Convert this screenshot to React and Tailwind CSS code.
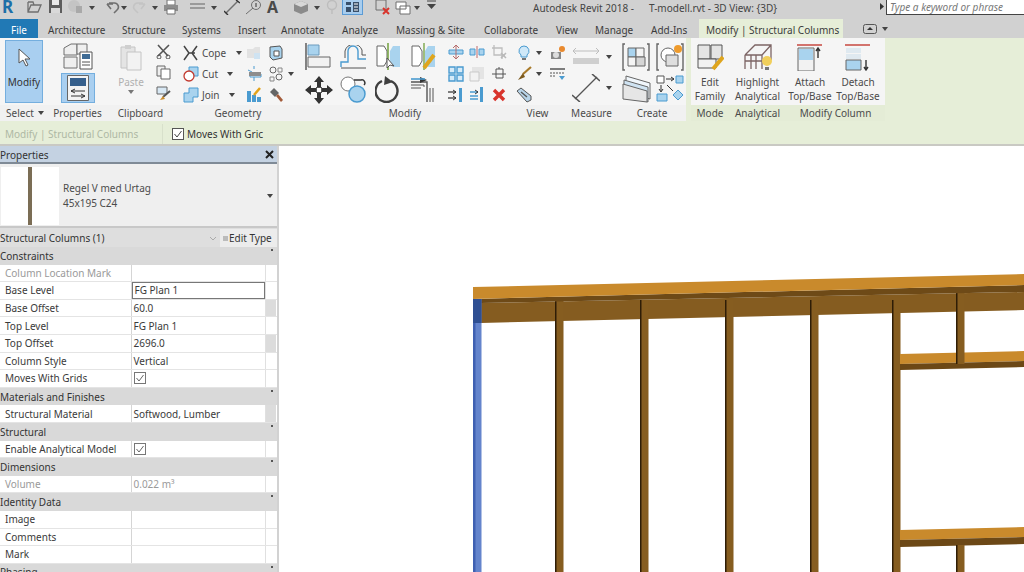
const Svg = ({ w = 16, h = 16, className = '', children }) => (
  <svg width={w} height={h} viewBox={`0 0 ${w} ${h}`} fill="none" className={`shrink-0 ${className}`}>
    {children}
  </svg>
);

const Caret = ({ className = '', color = '#444' }) => (
  <svg width="6" height="4" viewBox="0 0 6 4" className={`shrink-0 ${className}`}>
    <path d="M0 0h6L3 4z" fill={color} />
  </svg>
);

const GRAY = '#6f6f6f';
const BLUE = '#4a9bd0';
const LIGHT = '#a9d3ee';

// quick access toolbar, cut off at the top of the window
const QuickBar = () => (
  <div className="flex h-[19px] items-start overflow-hidden">
    <span className="ml-[2px] w-[12px] text-[17px] font-bold leading-[14px] text-[#1d6fa8]">R</span>
    <Svg className="ml-[13px]" w={15} h={14}><path d="M1 2v10h10l3-7H4l-3 7M1 2h5l1 3" stroke={GRAY} strokeWidth="1.3" /></Svg>
    <Svg className="ml-[6px]" w={15} h={14}><path d="M1 0h13v13H1z" fill="#5d5d5d" /><path d="M4 0h7v5H4z" fill="#e8e8e8" /><path d="M3 8h9v5H3z" fill="#d9d9d9" /></Svg>
    <Svg className="ml-[5px]" w={15} h={14}><circle cx="6" cy="6" r="6" fill="#c4c4c4" /><path d="M8 6h6v7H8z" fill="#a9a9a9" /></Svg>
    <Caret className="ml-[6px] mt-[6px]" />
    <Svg className="ml-[10px]" w={15} h={14}><path d="M2 4l4 5M2 4h6M4 3h5a4 4 0 0 1 3 7l-3 3" stroke={GRAY} strokeWidth="1.6" /></Svg>
    <Caret className="ml-[1px] mt-[6px]" />
    <Svg className="ml-[5px]" w={15} h={14}><path d="M13 4l-4 5M13 4H7M11 3H6a4 4 0 0 0-3 7l3 3" stroke="#c4c4c4" strokeWidth="1.6" /></Svg>
    <Caret className="ml-[5px] mt-[6px]" />
    <Svg className="ml-[5px]" w={16} h={15}><path d="M4 0h8v5H4z" fill="#fff" stroke={GRAY} /><path d="M1 5h14v6H1z" fill="#8d8d8d" /><path d="M4 9h8v5H4z" fill="#fff" stroke={GRAY} /></Svg>
    <Svg className="ml-[11px]" w={15} h={14}><path d="M0 4h15M0 8h15" stroke="#9a9a9a" strokeWidth="2" /></Svg>
    <Caret className="ml-[6px] mt-[6px]" />
    <Svg className="ml-[7px]" w={16} h={15}><path d="M2 13L14 1" stroke={GRAY} strokeWidth="1.4" /><path d="M0 11l4 4M12 0l4 3" stroke="#333" strokeWidth="1.4" /></Svg>
    <Svg className="ml-[5px]" w={17} h={15}><circle cx="11" cy="5" r="4.5" stroke={GRAY} /><path d="M1 14l7-6" stroke={GRAY} /><path d="M11 3v4" stroke="#333" /></Svg>
    <span className="ml-[5px] w-[12px] text-[16px] font-bold leading-[14px] text-[#4a4a4a]">A</span>
    <Svg className="ml-[14px]" w={16} h={15}><path d="M8 1l7 3v7l-7 3-7-3V4z" fill="#8b8b8b" /><path d="M8 7l7-3-7-3-7 3z" fill="#d8d8d8" /></Svg>
    <Caret className="ml-[5px] mt-[6px]" />
    <Svg className="ml-[6px]" w={12} h={14}><circle cx="6" cy="5" r="4.5" stroke="#bdbdbd" strokeWidth="1.4" /><path d="M6 10v4" stroke="#bdbdbd" strokeWidth="1.4" /></Svg>
    <div className="ml-[4px] -mt-[1px] flex h-[16px] w-[21px] items-center justify-center border border-[#5b9bd5] bg-[#a8cdee]">
      <Svg w={15} h={12}><path d="M1 1h5v3H1zM1 6h5v5H1zM8 1h6v10H8z" fill="#38506b" /><path d="M9 3h4M9 6h4M9 9h4" stroke="#fff" /></Svg>
    </div>
    <Svg className="ml-[12px]" w={16} h={15}><path d="M1 0h10v10H1z" stroke={GRAY} /><path d="M8 8l6 6m0-6l-6 6" stroke="#d8342c" strokeWidth="2" /></Svg>
    <Svg className="ml-[4px]" w={16} h={15}><path d="M1 2h10v7H1zM5 6h10v8H5z" fill="#fff" stroke={GRAY} /></Svg>
    <Caret className="ml-[3px] mt-[6px]" />
    <Svg className="ml-[7px]" w={9} h={10}><path d="M0 1h9" stroke="#444" /><path d="M0 4h9L4.5 9z" fill="#444" /></Svg>
  </div>
);

const tabs = [
  ['Architecture', 'w-[74px]'],
  ['Structure', 'w-[60px]'],
  ['Systems', 'w-[56px]'],
  ['Insert', 'w-[43px]'],
  ['Annotate', 'w-[61px]'],
  ['Analyze', 'w-[54px]'],
  ['Massing & Site', 'w-[88px]'],
  ['Collaborate', 'w-[72px]'],
  ['View', 'w-[39px]'],
  ['Manage', 'w-[56px]'],
  ['Add-Ins', 'w-[48px]'],
];

const TabBar = () => (
  <div className="flex h-[19px] items-center bg-[#d1d1d1] text-[#3c3c3c]">
    <div className="mr-[10px] flex h-[19px] w-[38px] items-center justify-center bg-[#2179b5] pt-[2px] text-white">File</div>
    {tabs.map(([name, width]) => (
      <span key={name} className={`pt-[2px] ${width}`}>{name}</span>
    ))}
    <div className="flex h-[19px] w-[144px] items-center bg-[#e6eed8] pl-[7px] pt-[2px]">Modify | Structural Columns</div>
    <Svg className="ml-[20px]" w={14} h={10}><rect x="0.5" y="0.5" width="13" height="9" rx="2" stroke="#555" /><path d="M4 6h6L7 3z" fill="#333" /></Svg>
    <Caret className="ml-[5px]" />
  </div>
);

const Panel = ({ label, width, green, children }) => (
  <div className={`flex shrink-0 flex-col ${width}`}>
    <div className="h-[67px] bg-[#f5f5f5]">{children}</div>
    <div className={`flex h-[16px] items-center justify-center whitespace-nowrap text-[#4b4b4b] ${green ? 'bg-[#e4ecd6]' : 'bg-[#f1f1f1]'}`}>
      {label}
    </div>
  </div>
);

const SelectPanel = () => (
  <Panel width="w-[50px]" label={<span className="flex items-center gap-[4px]">Select <Caret /></span>}>
    <div className="ml-[5px] mt-[2px] flex h-[63px] w-[38px] flex-col items-center border border-[#74aede] bg-[#a9cff0] text-[#333]">
      <Svg className="mt-[7px]" w={13} h={20}><path d="M1 1v14l4-3 3 6 2-1-3-6h5z" fill="#fff" stroke="#555" /></Svg>
      <span className="mt-[9px]">Modify</span>
    </div>
  </Panel>
);

const PropertiesPanel = () => (
  <Panel width="w-[55px]" label="Properties">
    <div className="flex flex-col items-center pt-[5px]">
      <Svg w={30} h={27}>
        <path d="M1 5l7-4h6v11H1zM1 14h13v11H1z" fill="#efefef" stroke={GRAY} />
        <path d="M14 1h10v10H14z" fill="#efefef" stroke={GRAY} />
        <path d="M17 9h12v17H17z" fill="#fff" stroke="#555" />
        <path d="M19 11h8v5h-8z" fill="#3f6b94" />
        <path d="M19 19h8M19 22h8" stroke="#555" />
      </Svg>
      <div className="mt-[3px] flex h-[30px] w-[34px] items-center justify-center border border-[#74aede] bg-[#a9cff0]">
        <Svg w={22} h={26}>
          <path d="M.5.5h21v25H.5z" fill="#f3f3f3" stroke="#666" />
          <path d="M3 3h16v8H3z" fill="#355f8c" />
          <path d="M4 16h14M4 21h14M8 14l-4 2 4 2M14 19l4 2-4 2" stroke="#333" />
        </Svg>
      </div>
    </div>
  </Panel>
);

const ClipboardPanel = () => (
  <Panel width="w-[71px]" label="Clipboard">
    <div className="flex pl-[13px] pt-[6px]">
      <div className="flex w-[26px] flex-col items-center text-[#b0b0b0]">
        <Svg w={24} h={27}><path d="M2 3h14v21H2z" fill="#e4e4e4" stroke="#c4c4c4" /><path d="M8 8h14v18H8z" fill="#f2f2f2" stroke="#c4c4c4" /><path d="M6 1h6v4H6z" fill="#cfcfcf" /></Svg>
        <span className="mt-[6px]">Paste</span>
        <Caret className="mt-[3px]" color="#777" />
      </div>
      <div className="ml-[12px] flex flex-col items-center gap-[6px]">
        <Svg w={15} h={15}><path d="M2 1l10 11M13 1L2 12" stroke="#555" strokeWidth="1.6" /><circle cx="3" cy="13" r="2" stroke="#555" /><circle cx="12" cy="13" r="2" stroke="#555" /></Svg>
        <Svg w={15} h={15}><path d="M1 1h8v10H1z" fill="#eee" stroke="#666" /><path d="M5 4h9v10H5z" fill="#fff" stroke="#666" /></Svg>
        <Svg w={15} h={15}><path d="M1 1h10v7H1z" fill="#d8e8f4" stroke="#666" /><path d="M14 5L7 11" stroke="#555" strokeWidth="2" /><path d="M7 10l-3 4 5-1z" fill="#c98b2c" /></Svg>
      </div>
    </div>
  </Panel>
);

const geometryRows = [
  {
    name: 'Cope',
    text: 'w-[34px]',
    icon: <Svg><path d="M1 1l5 7-5 7M14 1L9 8l5 7M5 8h7" stroke="#444" strokeWidth="1.5" /></Svg>,
    a: <Svg><path d="M1 4h6l2-2h5v11H1z" fill="#e2e2e2" /><path d="M8 8h6v6H8z" fill="#cfe3f2" /></Svg>,
    b: <Svg><path d="M2 2l10-1 2 3v9l-9 2-3-3z" fill={LIGHT} stroke="#555" /><path d="M6 6h5v5H6z" fill="#fff" stroke="#555" /></Svg>,
  },
  {
    name: 'Cut',
    text: 'w-[25px]',
    icon: <Svg><path d="M6 1h9v9H6z" fill={LIGHT} stroke={BLUE} /><circle cx="6" cy="10" r="5" fill="#fff" stroke="#c2392e" strokeWidth="1.3" /></Svg>,
    a: <Svg><path d="M8 0v3M8 11v4M2 4l4 2M4 8h11v3H4z" stroke={BLUE} /><path d="M3 6h12v4H3z" fill="#8d8d8d" /></Svg>,
    b: <Svg><circle cx="5" cy="4" r="3" stroke="#666" /><circle cx="11" cy="11" r="3" stroke="#666" /><path d="M2 11h4v4H2zM10 2h4v4h-4z" stroke="#888" /></Svg>,
    caret: true,
  },
  {
    name: 'Join',
    text: 'w-[27px]',
    icon: <Svg><path d="M6 1h9v9h-5v5H1V6h5z" fill={LIGHT} stroke={BLUE} /></Svg>,
    a: <Svg><path d="M1 4h4v11H1zM6 8h4v7H6zM11 10h4v5h-4z" fill={BLUE} /><path d="M14 1L8 8" stroke="#e2a31b" strokeWidth="2.5" /></Svg>,
    b: <Svg><path d="M2 5l4-4 5 5-4 4z" fill="#666" /><path d="M8 9l2-2 5 6-2 2z" fill="#a35b3a" /></Svg>,
  },
];

const GeometryPanel = () => (
  <Panel width="w-[124px]" label="Geometry">
    <div className="flex flex-col pl-[7px] pt-[4px] text-[#4b4b4b]">
      {geometryRows.map((row) => (
        <div key={row.name} className="flex h-[21px] items-center">
          <div className="flex w-[63px] items-center">
            {row.icon}
            <span className={`ml-[3px] ${row.text}`}>{row.name}</span>
            <Caret />
          </div>
          {row.a}
          <span className="ml-[6px]">{row.b}</span>
          {row.caret && <Caret className="ml-[4px]" />}
        </div>
      ))}
    </div>
  </Panel>
);

const mirrorShape = 'M2 3h7l3 5v10l-3 5H2z';

const modifyLarge = [
  <Svg key="align" w={28} h={27}><path d="M1 0v27" stroke="#666" strokeWidth="1.6" /><path d="M3 2h11v10H3z" fill={LIGHT} stroke="#6c9bbd" /><path d="M3 14h22v10H3z" fill="#f2f2f2" stroke="#666" /></Svg>,
  <Svg key="offset" w={27} h={24}><path d="M1 22V17h7V6a5 5 0 0 1 10 0v8h8" stroke={BLUE} strokeWidth="1.4" /><path d="M1 23h25M5 13V6a9 9 0 0 1 17-1v5h4" stroke="#555" /></Svg>,
  <Svg key="mirror-pick" w={26} h={27}><path d={mirrorShape} fill="#fff" stroke="#666" /><path d="M13 0v27" stroke="#7aa64a" strokeWidth="1.6" /><path d="M25 3h-7l-3 5v12l3 4h7z" fill={LIGHT} /><path d="M12 15v10l3-3 4 1z" fill="#fff" stroke="#555" /></Svg>,
  <Svg key="mirror-draw" w={26} h={27}><path d={mirrorShape} fill="#fff" stroke="#666" /><path d="M14 0v27" stroke="#7aa64a" strokeWidth="1.4" /><path d="M25 3h-7l-3 5v12l3 4h7z" fill={LIGHT} /><path d="M24 12L14 25" stroke="#dfa51d" strokeWidth="4" /></Svg>,
  <Svg key="move" w={28} h={28}><path d="M14 0l5 6h-3v5h-4V6H9zM14 28l5-6h-3v-5h-4v5H9zM0 14l6-5v3h5v4H6v3zM28 14l-6-5v3h-5v4h5v3z" fill="#333" /><rect x="11.5" y="11.5" width="5" height="5" fill="#fff" stroke="#555" /></Svg>,
  <Svg key="copy" w={27} h={27}><circle cx="8" cy="8" r="7" fill="#fff" stroke="#777" /><circle cx="17" cy="18" r="8" fill={LIGHT} stroke={BLUE} strokeWidth="1.5" /><path d="M14 4h7a3 3 0 0 1 3 5" stroke="#333" strokeWidth="1.4" /></Svg>,
  <Svg key="rotate" w={25} h={27}><path d="M7 5a11 11 0 1 0 9 0" stroke="#3f3f3f" strokeWidth="2.4" /><path d="M10 0l8 6-9 3z" fill="#3f3f3f" /></Svg>,
  <Svg key="trim" w={27} h={27}><path d="M1 6h16v20" stroke="#555" strokeWidth="1.4" /><path d="M1 9h13v2M1 12h10M20 12v14M23 12v14" stroke="#555" /><path d="M10 1l7 3-7 3z" fill="#333" /><path d="M1 3h14" stroke={BLUE} strokeWidth="1.6" /></Svg>,
];

const modifySmall = [
  <Svg key="1"><path d="M1 6h14v4H1z" fill={LIGHT} stroke={BLUE} /><path d="M8 1v14M5 4l3-3 3 3M5 12l3 3 3-3" stroke="#b66c6c" /></Svg>,
  <Svg key="2"><path d="M1 5h5v6H1zM10 5h5v6h-5z" fill={LIGHT} stroke={BLUE} /><path d="M8 2v12" stroke="#c06b6b" /></Svg>,
  <Svg key="3"><path d="M3 1v10h11M1 4h10v11" stroke="#bdbdbd" strokeWidth="1.3" /><path d="M10 9l5 5m0-5l-5 5" stroke="#b9b9b9" strokeWidth="1.6" /></Svg>,
  <Svg key="4"><path d="M1 1h6v6H1zM9 1h6v6H9zM1 9h6v6H1zM9 9h6v6H9z" fill="#d7ebf8" stroke={BLUE} strokeWidth="1.4" /></Svg>,
  <Svg key="5"><path d="M3 1h12v12H3z" fill="#e4e4e4" /><path d="M1 6h9v9H1z" fill="#f2f2f2" stroke="#c9c9c9" /></Svg>,
  <Svg key="6"><path d="M5 3h7v9H5z" stroke="#555" /><path d="M1 8h14M8 1v2" stroke="#555" /></Svg>,
  <Svg key="7"><path d="M0 5h8M0 11h8" stroke="#555" strokeWidth="1.3" /><path d="M5 3l3 2-3 2M5 9l3 2-3 2" stroke="#333" /><path d="M11 1h3v14h-3z" fill={BLUE} /></Svg>,
  <Svg key="8"><path d="M1 5h8M1 9h8M1 12h8" stroke={BLUE} strokeWidth="1.6" /><path d="M6 3l3 2-3 2" stroke="#333" /><path d="M11 0h3v15h-3z" fill={BLUE} /></Svg>,
  <Svg key="9"><path d="M3 3l10 10M13 3L3 13" stroke="#d8342c" strokeWidth="3.4" /></Svg>,
];

const ModifyPanel = () => (
  <Panel width="w-[210px]" label="Modify">
    <div className="flex pl-[5px] pt-[4px]">
      <div className="grid w-[141px] grid-cols-4 gap-y-[4px]">
        {modifyLarge.map((icon) => (
          <div key={icon.key} className="flex h-[29px] w-[35px] items-center">{icon}</div>
        ))}
      </div>
      <div className="grid w-[66px] grid-cols-3 gap-y-[5px] pt-[2px]">
        {modifySmall.map((icon) => (
          <div key={icon.key} className="flex h-[16px] w-[22px] items-center justify-center">{icon}</div>
        ))}
      </div>
    </div>
  </Panel>
);

const ViewPanel = () => (
  <Panel width="w-[55px]" label="View">
    <div className="flex flex-col pl-[6px] pt-[4px]">
      <div className="flex h-[21px] items-center">
        <Svg><path d="M8 1a5 5 0 0 0-3 9v2h6v-2a5 5 0 0 0-3-9z" fill="#cfe8f8" stroke={BLUE} /><path d="M6 14h4" stroke="#555" strokeWidth="1.6" /></Svg>
        <Caret className="ml-[4px]" />
        <Svg className="ml-[8px]"><path d="M1 7h10v7H1z" fill="#888" /><circle cx="6" cy="10" r="3" fill="#ddd" /><circle cx="12" cy="4" r="3" fill="#e98a2f" /></Svg>
      </div>
      <div className="flex h-[21px] items-center">
        <Svg><path d="M15 1L7 8" stroke="#a87a2a" strokeWidth="2.2" /><path d="M7 7l-5 7 7-3z" fill="#7d5a1e" /></Svg>
        <Caret className="ml-[4px]" />
        <Svg className="ml-[8px]"><path d="M0 3h15" stroke="#555" strokeWidth="1.5" /><path d="M0 7h15M0 10h5" stroke="#555" strokeDasharray="2 1" /><path d="M9 10h6l-3 4z" fill={BLUE} /></Svg>
      </div>
      <div className="flex h-[21px] items-center">
        <Svg><path d="M1 4l4-3 10 8v4l-4 2z" fill="#b8d4e8" stroke="#555" /><path d="M5 5l6 5" stroke="#555" strokeWidth="1.4" /></Svg>
      </div>
    </div>
  </Panel>
);

const MeasurePanel = () => (
  <Panel width="w-[53px]" label="Measure">
    <div className="flex flex-col pl-[7px] pt-[9px]">
      <div className="flex h-[25px] items-start">
        <Svg w={28} h={20}><path d="M1 4h26M4 1L1 4l3 3M24 1l3 3-3 3" stroke="#bdbdbd" /><path d="M1 11h26v6H1z" fill="#cfcfcf" /></Svg>
        <Caret className="ml-[6px] mt-[8px]" />
      </div>
      <div className="mt-[2px] flex h-[28px] items-center">
        <Svg w={28} h={28}><path d="M3 25L25 3" stroke="#555" strokeWidth="1.3" /><path d="M0 21l8 7M20 0l8 7" stroke="#555" strokeWidth="1.6" /></Svg>
        <Caret className="ml-[6px]" />
      </div>
    </div>
  </Panel>
);

const CreatePanel = () => (
  <Panel width="w-[68px]" label="Create">
    <div className="grid grid-cols-[34px_30px] gap-y-[3px] pl-[4px] pt-[5px]">
      <Svg w={28} h={28}><path d="M3 1H1v26h2M25 1h2v26h-2" stroke="#666" strokeWidth="1.4" /><path d="M6 5h8v9H6z" fill={LIGHT} stroke="#666" /><path d="M14 5h8v9h-8zM6 14h8v9H6z" fill="#f4f4f4" stroke="#666" /><path d="M14 14h9v9h-9z" fill="#d5d5d5" stroke="#666" /></Svg>
      <Svg w={28} h={28}><path d="M3 1H1v26h2M25 1h2v26h-2" stroke="#666" strokeWidth="1.4" /><circle cx="12" cy="12" r="7" fill="#fff" stroke="#666" /><path d="M10 12h12v11H10z" fill="#dedede" stroke="#666" /><circle cx="22" cy="6" r="4" fill="#ee9b2d" /></Svg>
      <Svg w={30} h={30}><path d="M4 2l24 7v16L4 18z" fill="#f0f6fb" stroke="#666" /><path d="M2 6l24 7v15L2 21z" fill="#cfe3f2" stroke="#666" /><path d="M1 10l24 7v11L1 25z" fill="#e6e6e6" stroke="#666" /></Svg>
      <Svg w={28} h={28}><path d="M1 2h7v7H1z" fill="#fff" stroke="#555" /><path d="M20 2h7v7h-7z" fill={LIGHT} stroke={BLUE} /><path d="M10 5h8M15 3l3 2-3 2M5 11v6M3 15l2 3 2-3M11 11l6 6" stroke="#333" /><path d="M1 20h10v7H1z" fill={LIGHT} stroke={BLUE} /><path d="M22 16l5 5-5 5-5-5z" fill={LIGHT} stroke={BLUE} /></Svg>
    </div>
  </Panel>
);

const BigTool = ({ top, bottom, children }) => (
  <div className="flex flex-1 flex-col items-center pt-[5px] text-[#4b4b4b]">
    <div className="flex h-[29px] items-center">{children}</div>
    <span className="mt-[3px] leading-[14px]">{top}</span>
    <span className="leading-[15px]">{bottom}</span>
  </div>
);

const ContextPanels = () => (
  <>
    <Panel width="w-[38px] ml-[5px]" label="Mode" green>
      <BigTool top="Edit" bottom="Family">
        <Svg w={27} h={27}><path d="M1 1h12v14H1zM14 1h11v14H14z" fill="#e4e4e4" stroke="#555" /><path d="M1 15h18v9H1z" fill="#f1f1f1" stroke="#555" /><path d="M26 13L16 25" stroke="#dfa51d" strokeWidth="4" /></Svg>
      </BigTool>
    </Panel>
    <Panel width="w-[57px]" label="Analytical" green>
      <BigTool top="Highlight" bottom="Analytical">
        <Svg w={28} h={27}><path d="M1 11L11 1h16v15M1 11h17M18 11l9-10M1 11v14M7 11v14M12 11v14M18 11v14M1 17h17" stroke="#7c6464" strokeWidth="1.3" /><circle cx="23" cy="17" r="5" fill="#f1cf5b" /><path d="M21 23h4v3h-4z" fill="#777" /></Svg>
      </BigTool>
    </Panel>
    <Panel width="w-[99px]" label="Modify Column" green>
      <div className="flex pr-[3px]">
        <BigTool top="Attach" bottom="Top/Base">
          <Svg w={27} h={27}><path d="M0 1h25" stroke="#c9524b" strokeWidth="1.6" /><path d="M1 4h16v23H1z" fill="#f2f2f2" stroke="#666" /><path d="M2 5h14v11H2z" fill={LIGHT} /><path d="M21 4v10M19 7l2-3 2 3" stroke="#333" strokeWidth="1.4" /></Svg>
        </BigTool>
        <BigTool top="Detach" bottom="Top/Base">
          <Svg w={27} h={27}><path d="M0 1h25" stroke="#c9524b" strokeWidth="1.6" /><path d="M1 4h15v5H1zM1 10h15v5H1z" fill="#dfe9f0" /><path d="M1 16h15v10H1z" fill={LIGHT} stroke="#666" /><path d="M21 16v10M19 23l2 3 2-3" stroke="#333" strokeWidth="1.4" /></Svg>
        </BigTool>
      </div>
    </Panel>
  </>
);

const Ribbon = () => (
  <div className="flex h-[83px] bg-[#e6eed8]">
    <SelectPanel />
    <PropertiesPanel />
    <ClipboardPanel />
    <GeometryPanel />
    <ModifyPanel />
    <ViewPanel />
    <MeasurePanel />
    <CreatePanel />
    <ContextPanels />
  </div>
);

const OptionsBar = () => (
  <div className="flex h-[25px] items-center border-b-2 border-[#c9c9c3] bg-[#e6eed8] pt-[3px]">
    <div className="flex h-full w-[163px] items-center border-r border-[#d8e0cb] pl-[5px] text-[#aeb8a4]">Modify | Structural Columns</div>
    <Svg className="ml-[9px]" w={12} h={12}><rect x="0.5" y="0.5" width="11" height="11" fill="#fff" stroke="#555" /><path d="M2.5 6l2.5 3 4.5-6" stroke="#444" /></Svg>
    <span className="ml-[3px] text-[#333]">Moves With Gric</span>
  </div>
);

const properties = [
  { group: 'Constraints' },
  { name: 'Column Location Mark', muted: true },
  { name: 'Base Level', value: 'FG Plan 1', boxed: true },
  { name: 'Base Offset', value: '60.0', thumb: true },
  { name: 'Top Level', value: 'FG Plan 1' },
  { name: 'Top Offset', value: '2696.0', thumb: true },
  { name: 'Column Style', value: 'Vertical' },
  { name: 'Moves With Grids', checked: true },
  { group: 'Materials and Finishes' },
  { name: 'Structural Material', value: 'Softwood, Lumber', thumb: true },
  { group: 'Structural' },
  { name: 'Enable Analytical Model', checked: true },
  { group: 'Dimensions' },
  { name: 'Volume', value: '0.022 m³', muted: true },
  { group: 'Identity Data' },
  { name: 'Image' },
  { name: 'Comments' },
  { name: 'Mark' },
  { group: 'Phasing' },
];

const PropertyRow = ({ row }) => {
  if (row.group) {
    return (
      <div className="flex h-[17.6px] shrink-0 items-center justify-between bg-[#d9d9d9] pr-[4px] text-[#333]">
        {row.group}
        <span className="mt-[2px] h-[2px] w-[2px] self-start bg-[#555]" />
      </div>
    );
  }
  const tone = row.muted ? 'text-[#9a9a9a]' : 'text-[#3a3a3a]';
  return (
    <div className={`flex h-[17.6px] shrink-0 border-b border-[#e4e4e4] bg-white ${tone}`}>
      <div className="flex w-[132px] items-center border-r border-[#d5d5d5] pl-[5px]">{row.name}</div>
      <div className={`flex w-[133px] items-center pl-[1.5px] ${row.boxed ? 'border border-[#777]' : ''}`}>
        {row.value}
        {row.checked && (
          <Svg w={12} h={12}><rect x="0.5" y="0.5" width="11" height="11" fill="#fff" stroke="#777" /><path d="M2.5 6l2.5 3 4.5-6" stroke="#666" /></Svg>
        )}
      </div>
      <div className={`w-[11px] border-l border-[#e0e0e0] ${row.thumb ? 'bg-[#dcdcdc]' : 'bg-white'}`} />
    </div>
  );
};

const PropertiesPalette = () => (
  <div className="flex h-full w-[279px] shrink-0 flex-col overflow-hidden border-r-2 border-[#d2d2d2] bg-[#eeeeee]">
    <div className="flex h-[18px] shrink-0 items-center justify-between border-b-2 border-[#7f8a96] bg-[#c4d2e2] pr-[3px] pt-[1px] text-[#333]">
      Properties
      <Svg w={9} h={9}><path d="M1 1l7 7m0-7L1 8" stroke="#222" strokeWidth="2" /></Svg>
    </div>
    <div className="flex h-[64px] shrink-0 items-center border-b-2 border-[#c8c8c8] bg-[#efefef] pl-[1px] pr-[4px] pt-[2px]">
      <div className="flex h-[58px] w-[58px] justify-center bg-white">
        <div className="h-full w-[4px] bg-[#7b6d55]" />
      </div>
      <div className="ml-[4px] flex-1 leading-[15px] text-[#4b4b4b]">
        <div>Regel V med Urtag</div>
        <div>45x195 C24</div>
      </div>
      <Caret />
    </div>
    <div className="flex h-[19px] shrink-0 items-center bg-[#dedede] pt-[1px] text-[#333]">
      <span className="w-[209px]">Structural Columns (1)</span>
      <Svg w={8} h={5}><path d="M1 1l3 3 3-3" stroke="#aaa" /></Svg>
      <div className="ml-[3px] flex h-full flex-1 items-center bg-[#ececec] pl-[3px]">
        <span className="h-[5px] w-[5px] bg-[#bbb]" />
        <span className="ml-[1px]">Edit Type</span>
      </div>
    </div>
    {properties.map((row) => (
      <PropertyRow key={row.group || row.name} row={row} />
    ))}
  </div>
);

const studs = [555, 640, 725, 810, 892];

const Stud = ({ x, y1, y2 }) => (
  <g>
    <rect x={x} y={y1} width="8.5" height={y2 - y1} fill="#865d20" />
    <rect x={x} y={y1} width="1.5" height={y2 - y1} fill="#2e1d06" />
  </g>
);

// the wall in the 3D view, in page coordinates
const WallView = () => (
  <svg className="h-full min-w-0 flex-1" viewBox="279 146 745 426" preserveAspectRatio="xMinYMin slice">
    <rect x="279" y="146" width="745" height="426" fill="#fff" />
    <path d="M481 303L1024 292V310L481 323Z" fill="#855c20" />
    {studs.map((x) => (
      <Stud key={x} x={x} y1={300} y2={572} />
    ))}
    <path d="M900 354L1024 351V361L900 364Z" fill="#c98a2c" />
    <path d="M900 364L1024 361V367L900 370Z" fill="#6c4816" />
    <Stud x={956} y1={293} y2={364} />
    <path d="M900 530L1024 527V537L900 540Z" fill="#c98a2c" />
    <path d="M900 540L1024 537V544L900 547Z" fill="#6c4816" />
    <Stud x={956} y1={545} y2={572} />
    <path d="M473 299L1024 285V292L481 303H473Z" fill="#6e4a17" />
    <path d="M473 287L1024 274V285L473 299Z" fill="#c98a2c" />
    <rect x="473" y="299" width="8.5" height="273" fill="#6484cc" />
    <rect x="473" y="299" width="2.5" height="273" fill="#3f60b2" />
    <rect x="473" y="299" width="8.5" height="24" fill="#2f4f92" />
  </svg>
);

export default function App() {
  return (
    <div
      className="flex h-[572px] w-[1024px] flex-col overflow-hidden bg-white text-[10px] leading-none"
      style={{ fontFamily: '"Noto Sans", "Open Sans", sans-serif' }}
    >
      <div className="flex h-[19px] items-start bg-[#d1d1d1]">
        <div className="w-[526px]">
          <QuickBar />
        </div>
        <div className="flex h-[15px] w-[354px] items-center pl-[7px] text-[#444]">
          <span>Autodesk Revit 2018 -</span>
          <span className="ml-[15px]">T-modell.rvt - 3D View: {'{3D}'}</span>
        </div>
        <Svg className="mt-[3px]" w={4} h={7}><path d="M0 0l4 3.5L0 7z" fill="#333" /></Svg>
        <div className="ml-[2px] flex h-[15px] flex-1 items-center border-b border-l border-[#444] bg-white pl-[3px] italic text-[#777]">
          Type a keyword or phrase
        </div>
      </div>
      <TabBar />
      <Ribbon />
      <OptionsBar />
      <div className="flex min-h-0 flex-1">
        <PropertiesPalette />
        <WallView />
      </div>
    </div>
  );
}
